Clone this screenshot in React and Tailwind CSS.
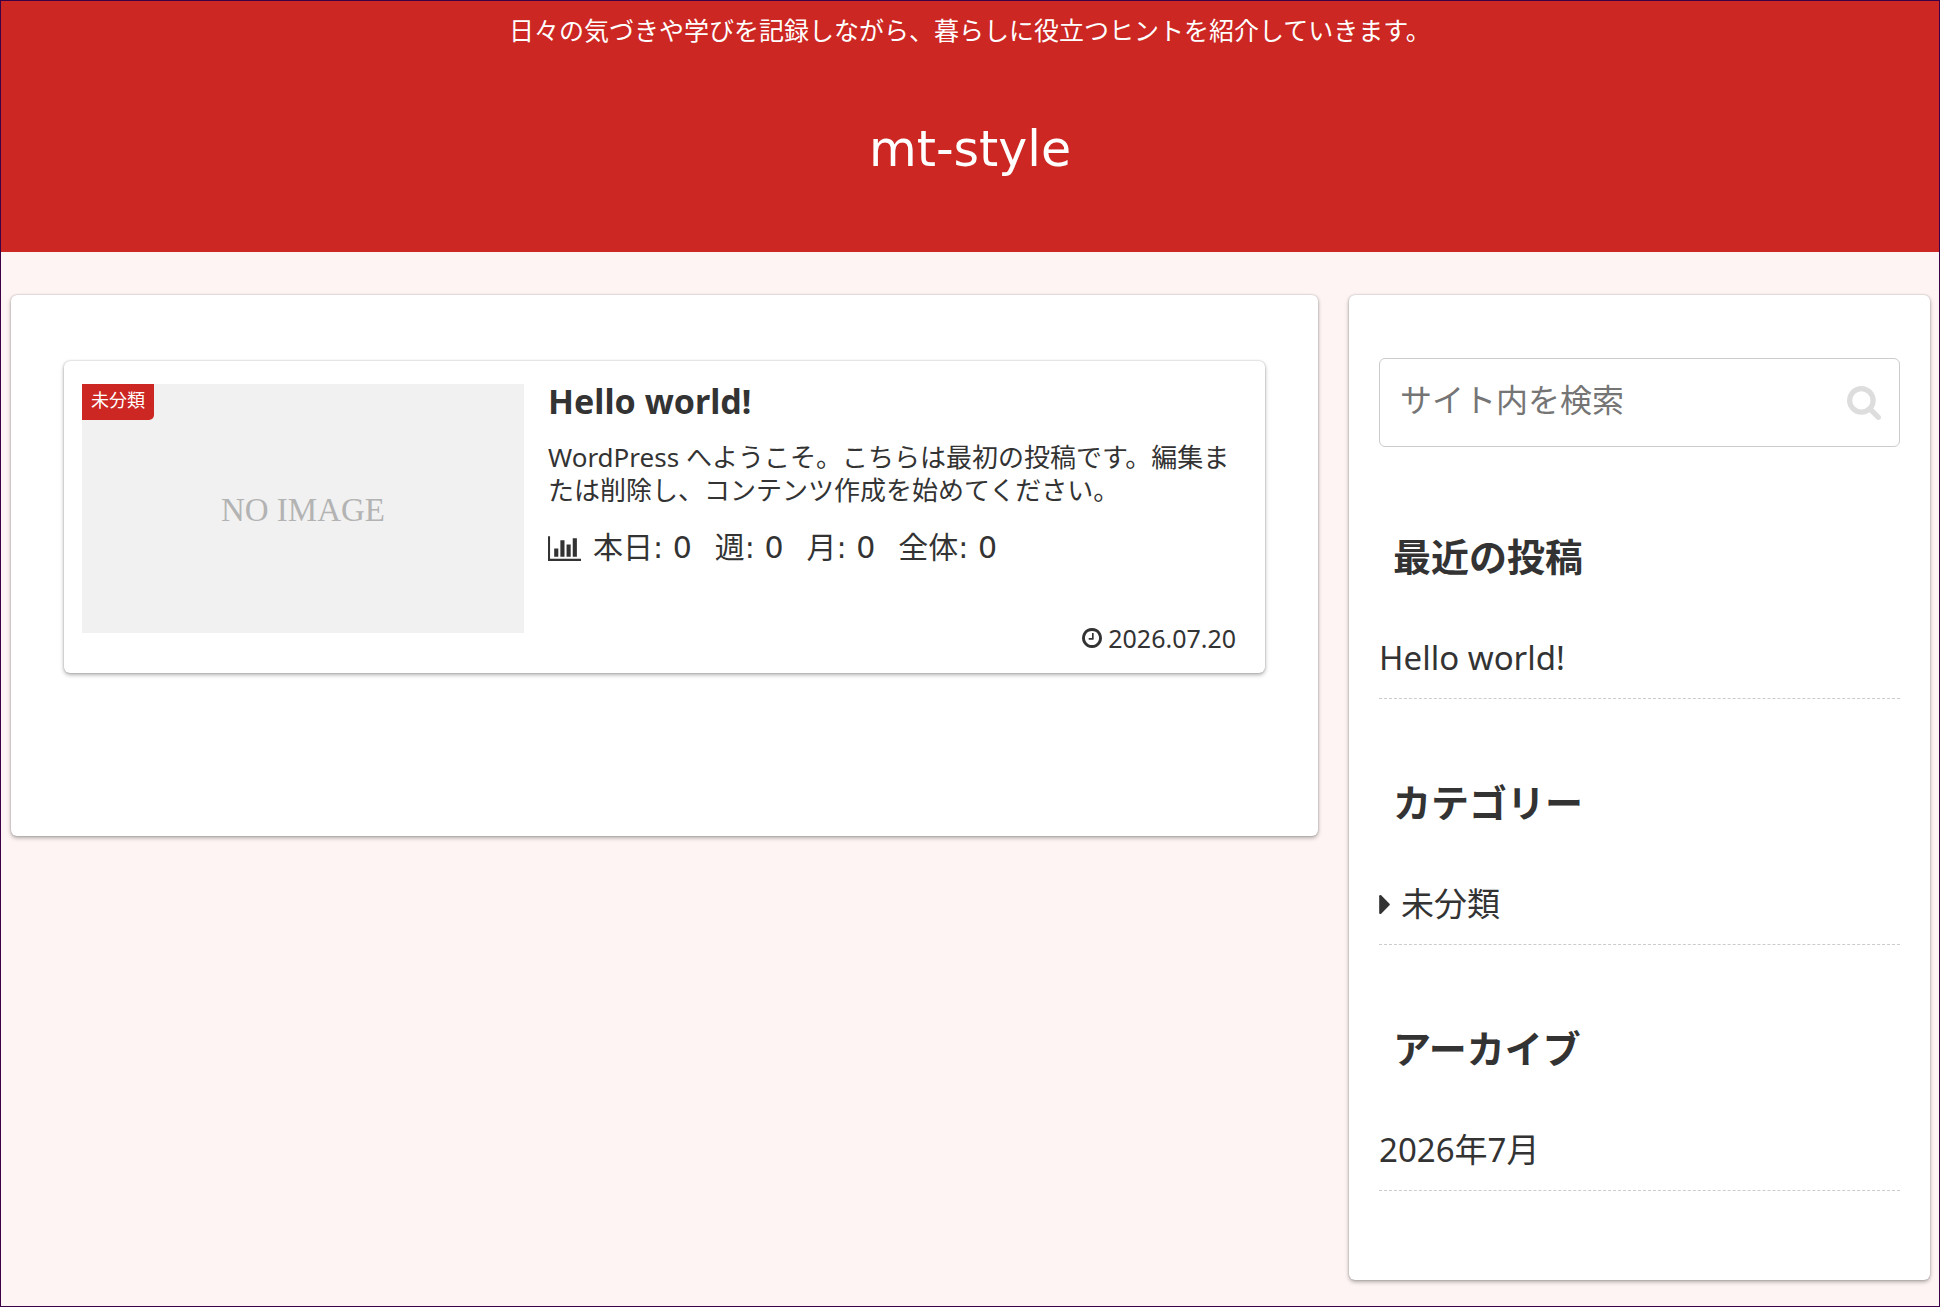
import React, { useState } from "react";

const recentPosts = [{ title: "Hello world!", url: "#hello-world" }];
const categories = [{ name: "未分類", url: "#uncategorized" }];
const archives = [{ label: "2026年7月", url: "#2026-07" }];

const views = [
  { label: "本日", count: 0 },
  { label: "週", count: 0 },
  { label: "月", count: 0 },
  { label: "全体", count: 0 },
];

const BarChartIcon = ({ className }) => (
  <svg className={className} viewBox="0 128 2048 1536" fill="currentColor" aria-hidden="true">
    <path d="M640 896v512h-256v-512h256zm384-512v1024h-256v-1024h256zm1024 1152v128h-2048v-1536h128v1408h1920zm-640-896v768h-256v-768h256zm384-384v1152h-256v-1152h256z" />
  </svg>
);

const ClockIcon = ({ className }) => (
  <svg className={className} viewBox="0 128 1536 1536" fill="currentColor" aria-hidden="true">
    <path d="M896 544v448q0 14-9 23t-23 9h-320q-14 0-23-9t-9-23v-64q0-14 9-23t23-9h224v-352q0-14 9-23t23-9h64q14 0 23 9t9 23zm416 352q0-148-73-273t-198-198-273-73-273 73-198 198-73 273 73 273 198 198 273 73 273-73 198-198 73-273zm224 0q0 209-103 385.5t-279.5 279.5-385.5 103-385.5-103-279.5-279.5-103-385.5 103-385.5 279.5-279.5 385.5-103 385.5 103 279.5 279.5 103 385.5z" />
  </svg>
);

const SearchIcon = ({ className }) => (
  <svg className={className} viewBox="64 128 1664 1664" fill="currentColor" aria-hidden="true">
    <path d="M1216 832q0-185-131.5-316.5t-316.5-131.5-316.5 131.5-131.5 316.5 131.5 316.5 316.5 131.5 316.5-131.5 131.5-316.5zm512 832q0 52-38 90t-90 38q-54 0-90-38l-343-342q-179 124-399 124-143 0-273.5-55.5t-225-150-150-225-55.5-273.5 55.5-273.5 150-225 225-150 273.5-55.5 273.5 55.5 225 150 150 225 55.5 273.5q0 220-124 399l343 343q37 37 37 90z" />
  </svg>
);

const CaretIcon = ({ className }) => (
  <svg className={className} viewBox="0 384 576 1024" fill="currentColor" aria-hidden="true">
    <path d="M576 896q0 26-19 45l-448 448q-19 19-45 19t-45-19-19-45v-896q0-26 19-45t45-19 45 19l448 448q19 19 19 45z" />
  </svg>
);

const Header = () => (
  <header className="flex h-[251px] flex-col items-center bg-[#cc2723] text-white">
    <p className="pt-[11px] text-[25px] leading-9">
      日々の気づきや学びを記録しながら、暮らしに役立つヒントを紹介していきます。
    </p>
    <h1 className="mt-[66px] font-['DejaVu_Sans',sans-serif] text-[49px] leading-[72px]">
      <a href="#home">mt-style</a>
    </h1>
  </header>
);

const EntryCard = () => (
  <article>
    <a
      href="#hello-world"
      className="flex min-h-[312px] gap-6 rounded-md bg-white pt-[23px] pr-[29px] pb-5 pl-[18px] shadow-[0_0_2px_rgba(0,0,0,0.25),0_2px_4px_rgba(0,0,0,0.3)]"
    >
      <figure className="relative flex h-[249px] w-[442px] shrink-0 items-center justify-center bg-[#f1f1f1] pt-0.5">
        <span className="font-['Liberation_Serif',serif] text-[33px] leading-10 text-[#b3b3b3]">
          NO IMAGE
        </span>
        <span className="absolute top-0 left-0 rounded-br-[5px] bg-[#cc2723] px-[9px] pb-1 text-lg leading-8 text-white">
          未分類
        </span>
      </figure>

      <div className="flex min-w-0 flex-1 flex-col">
        <h2 className="text-[34px] leading-[34px] font-bold">Hello world!</h2>
        <p className="mt-[23px] text-[26px] leading-[33px]">
          WordPress へようこそ。こちらは最初の投稿です。編集または削除し、コンテンツ作成を始めてください。
        </p>
        <div className="mt-[21px] flex items-center font-['DejaVu_Sans','Noto_Sans_CJK_JP',sans-serif] text-[30px] leading-10">
          <BarChartIcon className="mr-3 h-[25px] w-[33px]" />
          <div className="flex gap-[23px]">
            {views.map((view) => (
              <span key={view.label}>
                {view.label}: {view.count}
              </span>
            ))}
          </div>
        </div>
        <div className="mt-auto flex items-center justify-end gap-1.5 text-[25px] leading-[30px]">
          <ClockIcon className="size-5" />
          <time dateTime="2026-07-20">2026.07.20</time>
        </div>
      </div>
    </a>
  </article>
);

const SearchBox = () => {
  const [keyword, setKeyword] = useState("");

  return (
    <form
      className="flex h-[89px] items-center rounded-md border border-[#ccc] bg-white pr-[18px] pl-5"
      onSubmit={(e) => e.preventDefault()}
    >
      <input
        type="text"
        aria-label="サイト内を検索"
        placeholder="サイト内を検索"
        value={keyword}
        onChange={(e) => setKeyword(e.target.value)}
        className="min-w-0 flex-1 pb-1.5 text-[32px] leading-[48px] outline-none placeholder:text-[#757575]"
      />
      <button type="submit" aria-label="検索" className="text-[#ddd]">
        <SearchIcon className="size-[34px]" />
      </button>
    </form>
  );
};

const Widget = ({ title, children }) => (
  <section>
    <h3 className="pl-3.5 text-[38px] leading-[46px] font-bold">{title}</h3>
    <ul className="mt-[50px] text-[33px] leading-[58px]">{children}</ul>
  </section>
);

const WidgetItem = ({ href, children }) => (
  <li className="border-b border-dashed border-[#ccc] pb-[11px]">
    <a href={href} className="flex items-center gap-[11px]">
      {children}
    </a>
  </li>
);

const Sidebar = () => (
  <aside className="rounded-md bg-white px-[30px] pt-[63px] pb-[89px] shadow-[0_0_2px_rgba(0,0,0,0.25),0_2px_4px_rgba(0,0,0,0.3)]">
    <SearchBox />
    <div className="mt-[86px] flex flex-col gap-20">
      <Widget title="最近の投稿">
        {recentPosts.map((post) => (
          <WidgetItem key={post.url} href={post.url}>
            {post.title}
          </WidgetItem>
        ))}
      </Widget>
      <Widget title="カテゴリー">
        {categories.map((category) => (
          <WidgetItem key={category.url} href={category.url}>
            <CaretIcon className="h-[19px] w-[11px]" />
            {category.name}
          </WidgetItem>
        ))}
      </Widget>
      <Widget title="アーカイブ">
        {archives.map((archive) => (
          <WidgetItem key={archive.url} href={archive.url}>
            {archive.label}
          </WidgetItem>
        ))}
      </Widget>
    </div>
  </aside>
);

const App = () => {
  return (
    <div className="min-h-screen border border-[#3c0046] bg-[#fdf4f3] font-['Noto_Sans','Noto_Sans_CJK_JP',sans-serif] text-[#333]">
      <Header />
      <div className="grid grid-cols-[minmax(0,9fr)_minmax(0,4fr)] items-start gap-[31px] pt-[43px] pr-[9px] pb-[25px] pl-2.5">
        <main className="rounded-md bg-white px-[53px] pt-[66px] pb-[163px] shadow-[0_0_2px_rgba(0,0,0,0.25),0_2px_4px_rgba(0,0,0,0.3)]">
          <EntryCard />
        </main>
        <Sidebar />
      </div>
    </div>
  );
};

export default App;
